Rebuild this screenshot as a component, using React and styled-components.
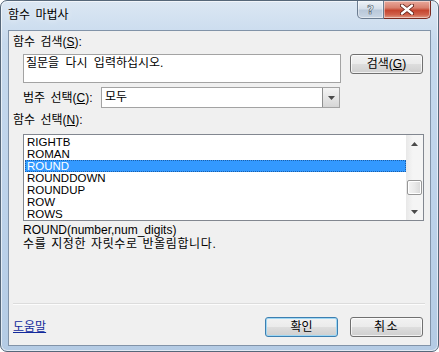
import React from 'react';
import styled, { createGlobalStyle } from 'styled-components';

const GlobalStyle = createGlobalStyle`
  html, body {
    margin: 0;
    padding: 0;
    background: #ffffff;
  }
  body {
    font-family: "Liberation Sans", "Noto Sans CJK KR", sans-serif;
    font-size: 12px;
    color: #000;
  }
`;

const Frame = styled.div`
  width: 439px;
  height: 352px;
  box-sizing: border-box;
  border: 1px solid #566779;
  border-radius: 7px;
  background: linear-gradient(180deg, #dbe7f3 0%, #c6d9ed 12%, #bcd2ea 60%, #b4cbe4 100%);
  box-shadow: inset 0 0 0 1px rgba(255, 255, 255, 0.6);
  display: flex;
  flex-direction: column;
  padding: 0 7px 5px 7px;
  overflow: hidden;
`;

const TitleBar = styled.div`
  height: 29px;
  display: flex;
  align-items: flex-start;
`;

const Title = styled.div`
  padding-top: 7px;
  line-height: 14px;
  font-size: 12px;
  word-spacing: 2px;
  color: #000;
  text-shadow: 0 0 6px rgba(255, 255, 255, 0.9);
`;

const Caption = styled.div`
  margin-left: auto;
  display: flex;
`;

const CaptionButton = styled.div`
  width: ${p => (p.$close ? 47 : 27)}px;
  height: 18px;
  box-sizing: border-box;
  border: 1px solid ${p => (p.$close ? '#7a2a20' : '#6b7c90')};
  border-top: none;
  border-left-width: ${p => (p.$close ? 0 : 1)}px;
  border-radius: ${p => (p.$close ? '0 0 5px 0' : '0 0 0 5px')};
  background: ${p =>
    p.$close
      ? 'linear-gradient(180deg, #e9a99c 0%, #d8806e 40%, #c5452f 55%, #d0604a 80%, #e09a84 100%)'
      : 'linear-gradient(180deg, #eef2f7 0%, #d6dfea 45%, #b9c8d9 55%, #c9d6e4 100%)'};
  box-shadow: inset 0 0 0 1px rgba(255, 255, 255, 0.45);
  display: flex;
  align-items: center;
  justify-content: center;
`;

const HelpGlyph = styled.span`
  font-family: "DejaVu Sans", sans-serif;
  font-size: 12px;
  font-weight: bold;
  line-height: 1;
  color: #f4f6f9;
  -webkit-text-stroke: 0.6px #4d5a6a;
`;

const Client = styled.div`
  flex: 1;
  border: 1px solid #8193a8;
  background: #f0f0f0;
  padding: 4px 7px 8px 4px;
  display: flex;
  flex-direction: column;
`;

const Label = styled.div`
  line-height: 14px;
  height: 14px;
  margin-top: ${p => p.$top || 0}px;
  word-spacing: 2px;
  white-space: nowrap;
`;

const Row = styled.div`
  display: flex;
  align-items: ${p => p.$align || 'flex-start'};
  margin-top: ${p => p.$top || 0}px;
  margin-left: 10px;
`;

const TextBox = styled.div`
  width: 318px;
  height: 29px;
  box-sizing: border-box;
  border: 1px solid #a3a3a3;
  background: #fff;
  padding: 1px 2px;
  line-height: 14px;
  word-spacing: 3px;
`;

const PushButton = styled.div`
  width: 73px;
  height: 20px;
  box-sizing: border-box;
  margin-left: ${p => p.$left || 0}px;
  border: 1px solid ${p => (p.$default ? '#3c7fb1' : '#707070')};
  border-radius: 3px;
  background: linear-gradient(180deg, #f2f2f2 0%, #ebebeb 48%, #dddddd 52%, #cfcfcf 100%);
  box-shadow: inset 0 0 0 1px ${p => (p.$default ? '#9fd7f3' : 'rgba(255,255,255,0.7)')};
  display: flex;
  align-items: center;
  justify-content: center;
  line-height: 14px;
  letter-spacing: ${p => p.$spread || 0}px;
`;

const ComboLabel = styled.div`
  width: 78px;
  line-height: 14px;
  word-spacing: 2px;
  white-space: nowrap;
`;

const Combo = styled.div`
  width: 239px;
  height: 21px;
  box-sizing: border-box;
  border: 1px solid #a3a3a3;
  background: #fff;
  display: flex;
  align-items: stretch;
`;

const ComboText = styled.div`
  flex: 1;
  padding-left: 3px;
  line-height: 19px;
`;

const ComboArrow = styled.div`
  width: 16px;
  border-left: 1px solid #8e8f8f;
  background: linear-gradient(180deg, #f4f4f4 0%, #e6e6e6 50%, #d6d6d6 100%);
  display: flex;
  align-items: center;
  justify-content: center;
`;

const ListBox = styled.div`
  margin-top: 7px;
  margin-left: 10px;
  width: 401px;
  height: 87px;
  box-sizing: border-box;
  border: 1px solid #828790;
  background: #fff;
  display: flex;
`;

const Items = styled.div`
  flex: 1;
  padding: 1px 0 0 1px;
`;

const Item = styled.div`
  height: 12px;
  line-height: 12px;
  font-size: 11.5px;
  padding-left: 2px;
  overflow: hidden;
  color: ${p => (p.$selected ? '#fff' : '#000')};
  background: ${p => (p.$selected ? '#3399ff' : 'transparent')};
  outline: ${p => (p.$selected ? '1px dotted #1c5fa8' : 'none')};
  outline-offset: -1px;
`;

const ScrollBar = styled.div`
  width: 17px;
  background: linear-gradient(90deg, #e8e8e8 0%, #f5f5f5 40%, #f5f5f5 100%);
  display: flex;
  flex-direction: column;
`;

const ScrollArrow = styled.div`
  height: 17px;
  display: flex;
  align-items: center;
  justify-content: center;
`;

const Track = styled.div`
  flex: 1;
  padding-top: 28px;
  display: flex;
  justify-content: center;
`;

const Thumb = styled.div`
  width: 15px;
  height: 15px;
  box-sizing: border-box;
  border: 1px solid #979797;
  border-radius: 2px;
  background: linear-gradient(90deg, #f4f4f4 0%, #e9e9e9 50%, #d8d8d8 100%);
  box-shadow: inset 0 0 0 1px #fff;
`;

const Desc = styled.div`
  margin-top: ${p => (p.$first ? 2 : 0)}px;
  margin-left: 10px;
  line-height: 14px;
  word-spacing: ${p => p.$words || 0}px;
  letter-spacing: ${p => p.$spread || 0}px;
`;

const Spacer = styled.div`
  flex: 1;
`;

const Separator = styled.div`
  height: 1px;
  background: #dcdcdc;
  border-bottom: 1px solid #fcfcfc;
  margin-right: -2px;
`;

const Footer = styled.div`
  margin-top: 12px;
  display: flex;
  align-items: center;
`;

const HelpLink = styled.a`
  color: #122a9c;
  text-decoration: underline;
  line-height: 14px;
  margin-right: auto;
`;

const Triangle = ({ up }) => (
  <svg width="7" height="4" viewBox="0 0 7 4">
    <polygon points={up ? '3.5,0 7,4 0,4' : '0,0 7,0 3.5,4'} fill="#4a4a4a" />
  </svg>
);

const items = ['RIGHTB', 'ROMAN', 'ROUND', 'ROUNDDOWN', 'ROUNDUP', 'ROW', 'ROWS'];

export default function App() {
  return (
    <>
      <GlobalStyle />
      <Frame>
        <TitleBar>
          <Title>함수 마법사</Title>
          <Caption>
            <CaptionButton>
              <HelpGlyph>?</HelpGlyph>
            </CaptionButton>
            <CaptionButton $close>
              <svg width="14" height="11" viewBox="0 0 14 11">
                <path d="M2 1.5 L12 9.5 M12 1.5 L2 9.5" stroke="#5a1a12" strokeWidth="4" strokeLinecap="round" />
                <path d="M2 1.5 L12 9.5 M12 1.5 L2 9.5" stroke="#ffffff" strokeWidth="2.4" strokeLinecap="round" />
              </svg>
            </CaptionButton>
          </Caption>
        </TitleBar>
        <Client>
          <Label>함수 검색(<u>S</u>):</Label>
          <Row $top={5}>
            <TextBox>질문을 다시 입력하십시오.</TextBox>
            <PushButton $left={9}>검색(<u>G</u>)</PushButton>
          </Row>
          <Row $top={4} $align="center">
            <ComboLabel>범주 선택(<u>C</u>):</ComboLabel>
            <Combo>
              <ComboText>모두</ComboText>
              <ComboArrow>
                <Triangle />
              </ComboArrow>
            </Combo>
          </Row>
          <Label $top={5}>함수 선택(<u>N</u>):</Label>
          <ListBox>
            <Items>
              {items.map(name => (
                <Item key={name} $selected={name === 'ROUND'}>{name}</Item>
              ))}
            </Items>
            <ScrollBar>
              <ScrollArrow><Triangle up /></ScrollArrow>
              <Track><Thumb /></Track>
              <ScrollArrow><Triangle /></ScrollArrow>
            </ScrollBar>
          </ListBox>
          <Desc $first>ROUND(number,num_digits)</Desc>
          <Desc $spread={0.6} $words={1}>수를 지정한 자릿수로 반올림합니다.</Desc>
          <Spacer />
          <Separator />
          <Footer>
            <HelpLink href="#">도움말</HelpLink>
            <PushButton $default>확인</PushButton>
            <PushButton $left={12} $spread={1.5}>취소</PushButton>
          </Footer>
        </Client>
      </Frame>
    </>
  );
}
